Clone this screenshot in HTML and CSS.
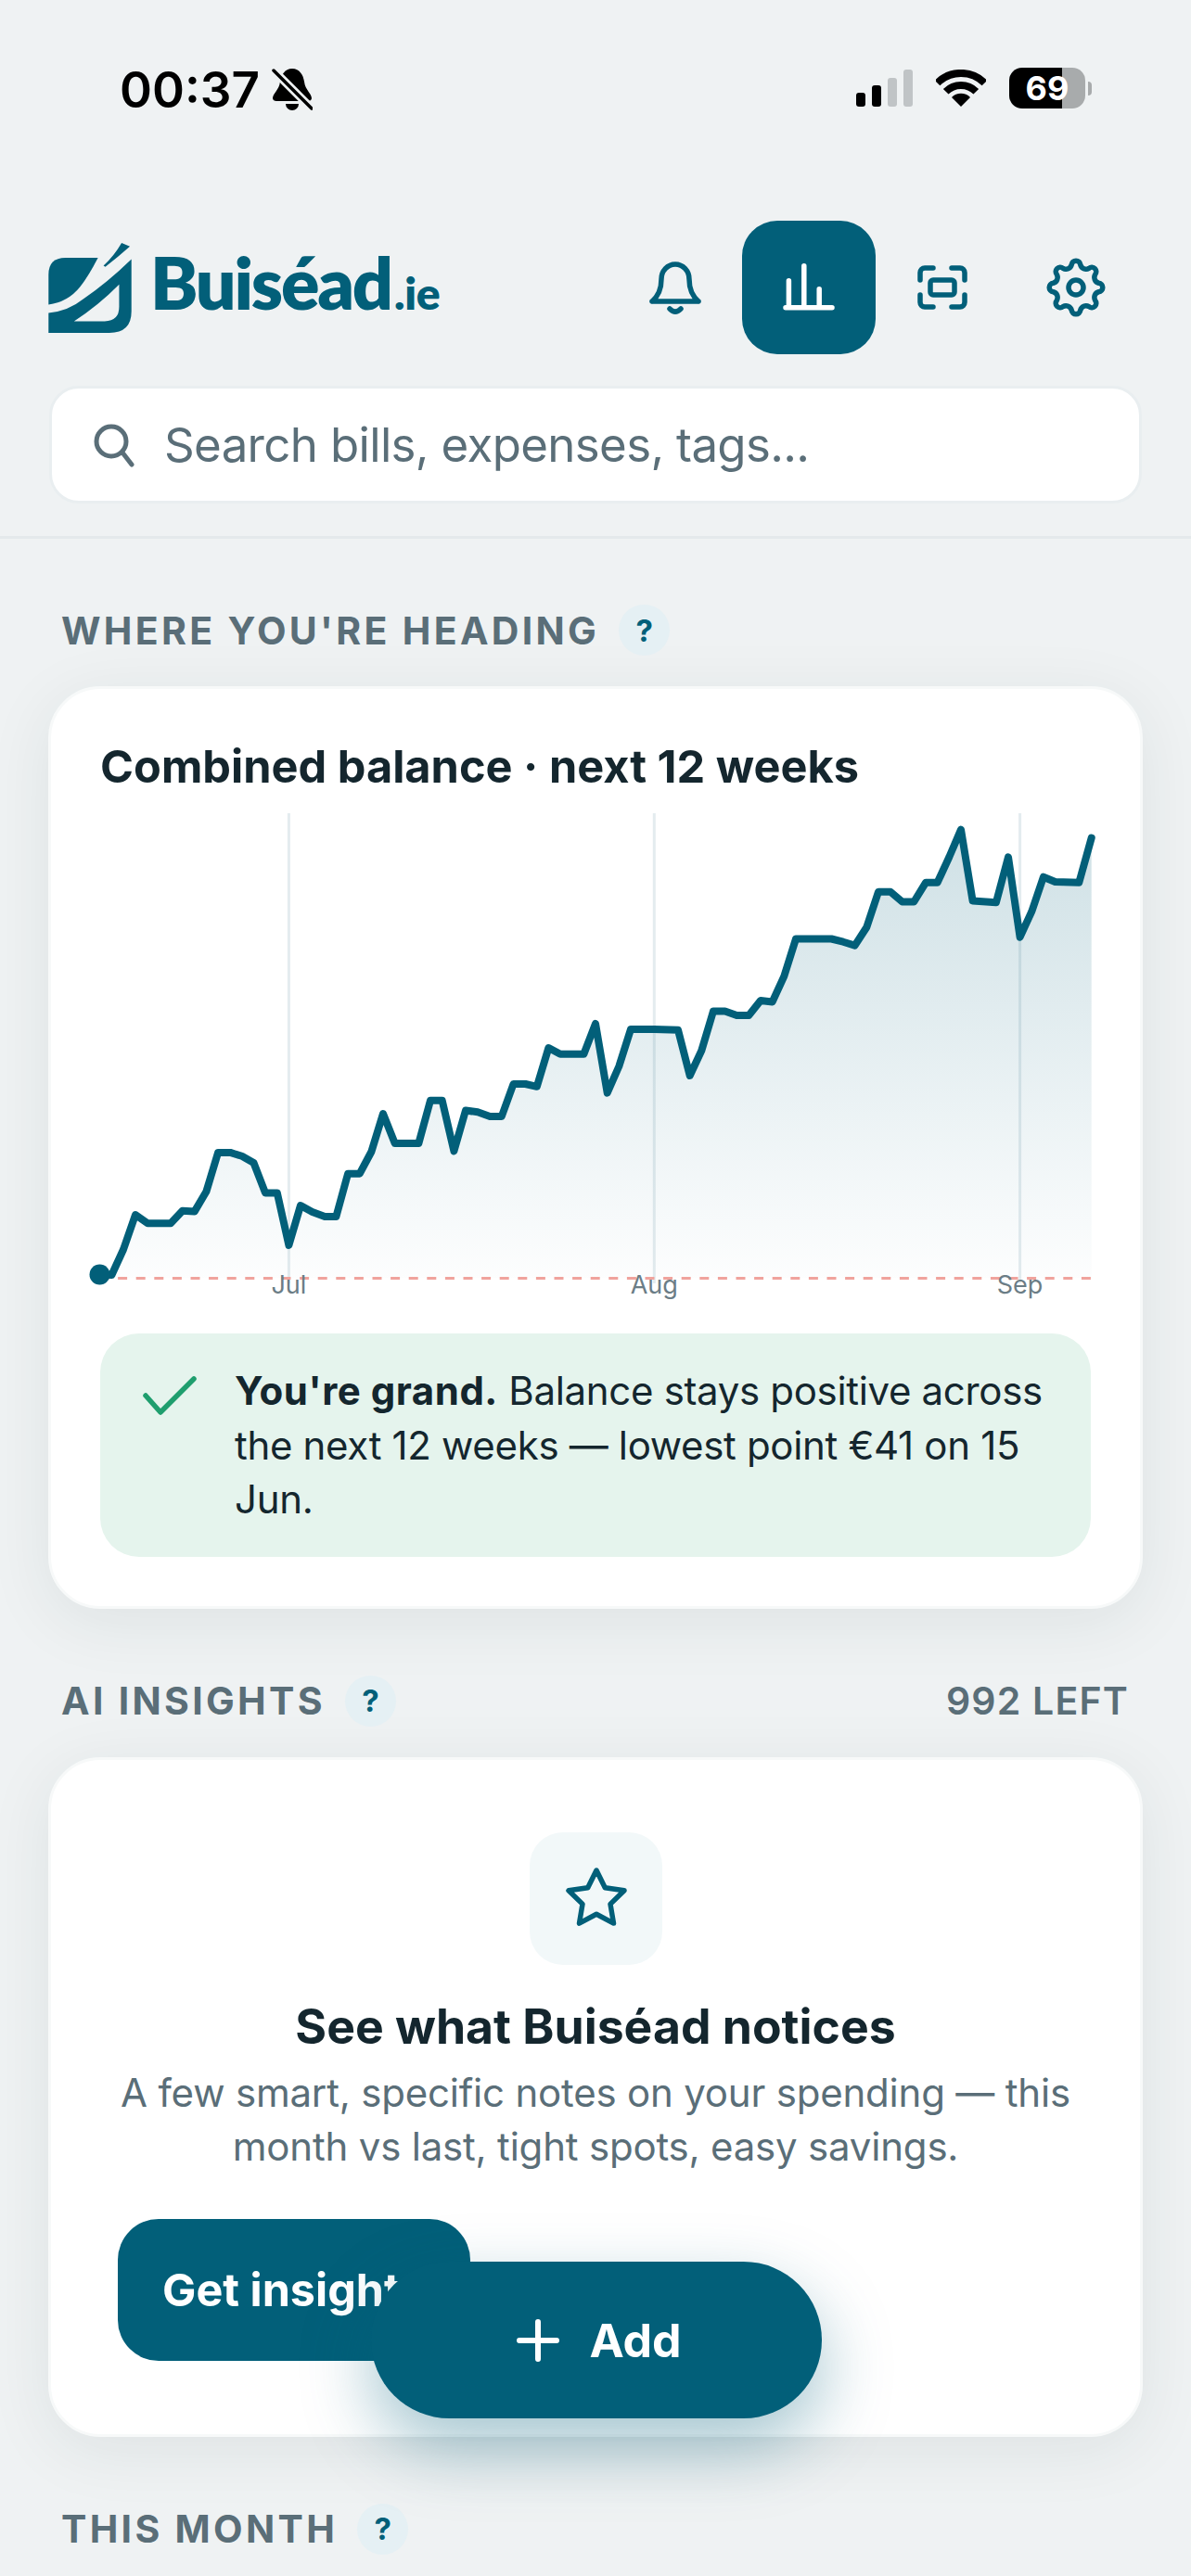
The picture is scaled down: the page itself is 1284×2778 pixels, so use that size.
FILE: index.html
```html
<!DOCTYPE html>
<html lang="en">
<head>
    <meta charset="UTF-8">
    <meta name="viewport" content="width=device-width, initial-scale=1.0">
    <title>Buiséad.ie</title>
    <link rel="stylesheet" href="styles.css">
</head>
<body>
    <div class="status">
        <div class="status-left">
            <span class="clock">00:37</span>
            <svg class="mute" viewBox="0 0 44 47">
                <path d="M22 1C30 1 34 8 35 15C36 24 43 28 43 33C43 35 41 36 39 36H5C3 36 1 35 1 33C1 28 8 24 9 15C10 8 14 1 22 1Z"/>
                <path d="M15 39H29A7 7 0 0 1 15 39Z"/>
                <path class="mute-gap" d="M0 1L44 45"/>
                <path class="mute-line" d="M2 3L43 44"/>
            </svg>
        </div>
        <div class="status-right">
            <div class="signal">
                <i class="bar bar-1"></i>
                <i class="bar bar-2"></i>
                <i class="bar bar-3"></i>
                <i class="bar bar-4"></i>
            </div>
            <svg class="wifi" viewBox="0 0 54 40">
                <path class="wifi-arc" d="M1.5 14.5A36 36 0 0 1 52.5 14.5"/>
                <path class="wifi-arc" d="M10.7 23.7A23 23 0 0 1 43.3 23.7"/>
                <path d="M27 40L17 30A14 14 0 0 1 37 30Z"/>
            </svg>
            <div class="battery">69</div>
            <i class="battery-nub"></i>
        </div>
    </div>

    <header class="topbar">
        <div class="brand">
            <svg class="brand-mark" viewBox="67 62 270 293">
                <path d="M67 165Q67 110 122 110L228 110Q200 165 170 205Q130 255 67 263Z"/>
                <path d="M305 62L332 73Q290 110 252 140L246 136Q280 105 305 62Z"/>
                <path fill-rule="evenodd" d="M337 115L337 285Q337 355 265 355L67 355L67 290Q130 285 180 245Q260 190 337 115ZM297 197L297 270Q297 317 250 317L150 317Q230 265 297 197Z"/>
            </svg>
            <span class="brand-name">Buiséad<span class="brand-tld">.ie</span></span>
        </div>
        <nav class="nav">
            <button class="nav-btn">
                <svg class="icon" viewBox="0 0 72 72">
                    <path d="M11 51H61M11 51C18 45 21 38 21 27A15 16 0 0 1 51 27C51 38 54 45 61 51M30 59Q36 65 42 59"/>
                </svg>
            </button>
            <button class="nav-btn nav-btn-active">
                <svg class="icon" viewBox="0 0 72 72">
                    <path d="M14.4 28.7V57.7M30.8 12.7V57.7M47.2 37.7V57.7M11 57.7H61"/>
                </svg>
            </button>
            <button class="nav-btn">
                <svg class="icon" viewBox="0 0 72 72">
                    <path d="M12 28V20A5 5 0 0 1 17 15H26M46 15H55A5 5 0 0 1 60 20V28M60 44V52A5 5 0 0 1 55 57H46M26 57H17A5 5 0 0 1 12 52V44"/>
                    <rect x="23" y="28" width="26" height="16" rx="3"/>
                </svg>
            </button>
            <button class="nav-btn">
                <svg class="icon" viewBox="0 0 72 72">
                    <path d="M31.23 11.46A4.8 4.8 0 0 1 40.77 11.46A6.2 6.2 0 0 0 49.98 15.27A4.8 4.8 0 0 1 56.73 22.02A6.2 6.2 0 0 0 60.54 31.23A4.8 4.8 0 0 1 60.54 40.77A6.2 6.2 0 0 0 56.73 49.98A4.8 4.8 0 0 1 49.98 56.73A6.2 6.2 0 0 0 40.77 60.54A4.8 4.8 0 0 1 31.23 60.54A6.2 6.2 0 0 0 22.02 56.73A4.8 4.8 0 0 1 15.27 49.98A6.2 6.2 0 0 0 11.46 40.77A4.8 4.8 0 0 1 11.46 31.23A6.2 6.2 0 0 0 15.27 22.02A4.8 4.8 0 0 1 22.02 15.27A6.2 6.2 0 0 0 31.23 11.46Z"/>
                    <circle cx="36" cy="36" r="8"/>
                </svg>
            </button>
        </nav>
    </header>

    <div class="search">
        <svg class="search-icon" viewBox="0 0 48 48">
            <circle cx="20" cy="20" r="16"/>
            <path d="M32 32L42 45"/>
        </svg>
        <span class="search-text">Search bills, expenses, tags...</span>
    </div>

    <main class="content">
        <section class="section">
            <div class="section-head">
                <div class="section-title">
                    <h2>WHERE YOU'RE HEADING</h2>
                    <span class="help">?</span>
                </div>
            </div>
            <div class="card">
                <h3 class="chart-title">Combined balance · next 12 weeks</h3>
                <svg class="chart" viewBox="108 870 1068 540">
                    <defs>
                        <linearGradient id="areaFill" gradientUnits="userSpaceOnUse" x1="0" y1="895" x2="0" y2="1378">
                            <stop offset="0" stop-color="#025f79" stop-opacity="0.19"/>
                            <stop offset="1" stop-color="#025f79" stop-opacity="0.01"/>
                        </linearGradient>
                    </defs>
                    <path class="chart-grid" d="M311.4 877V1384M705.3 877V1384M1099.6 877V1384"/>
                    <polygon fill="url(#areaFill)" points="107.5,1378 107.5,1374.5 120.4,1375 133,1347.5 146,1310 159.2,1319.3 184,1319.3 196.7,1305.7 209.8,1306.4 222.4,1285 235.1,1242.9 248.2,1242.9 260.8,1246.8 273.5,1254 286,1286.4 298.8,1286.4 311.4,1342.9 324,1300 336.7,1307 350.2,1312 362.4,1312 375.1,1265.7 387.8,1265.7 400.4,1242 413,1201 425.7,1232.9 451.4,1232.9 464,1186.8 476.7,1186.8 489.4,1241.4 502,1197.5 515,1199.3 528.2,1204 540.8,1204 553.5,1169 566.5,1169 578.8,1171.8 591.4,1130 604,1136.8 629.4,1136.8 642,1103.9 654.7,1178.6 667.3,1150 680,1110 705.3,1110 731,1110.7 743.7,1160 756.3,1133 769,1090.4 781.6,1090.4 794.3,1095 807.3,1095 820,1079 832.7,1080.4 845.3,1052.9 858,1012.5 896.3,1012.5 909,1015.7 921.6,1019.6 934.3,1000 947,961.8 960,961.8 972.7,972.5 985.3,972.5 998,951.8 1010.6,951.8 1023.3,924.3 1036,894.6 1048.6,971.4 1073.9,973.2 1087,924.3 1099.6,1010.7 1112.2,983.2 1124.9,945.7 1137.6,951 1163.3,951.8 1176.7,903.6 1176.7,1378"/>
                    <path class="chart-zero" d="M107.5 1378.6H1176.7"/>
                    <polyline class="chart-line" points="107.5,1374.5 120.4,1375 133,1347.5 146,1310 159.2,1319.3 184,1319.3 196.7,1305.7 209.8,1306.4 222.4,1285 235.1,1242.9 248.2,1242.9 260.8,1246.8 273.5,1254 286,1286.4 298.8,1286.4 311.4,1342.9 324,1300 336.7,1307 350.2,1312 362.4,1312 375.1,1265.7 387.8,1265.7 400.4,1242 413,1201 425.7,1232.9 451.4,1232.9 464,1186.8 476.7,1186.8 489.4,1241.4 502,1197.5 515,1199.3 528.2,1204 540.8,1204 553.5,1169 566.5,1169 578.8,1171.8 591.4,1130 604,1136.8 629.4,1136.8 642,1103.9 654.7,1178.6 667.3,1150 680,1110 705.3,1110 731,1110.7 743.7,1160 756.3,1133 769,1090.4 781.6,1090.4 794.3,1095 807.3,1095 820,1079 832.7,1080.4 845.3,1052.9 858,1012.5 896.3,1012.5 909,1015.7 921.6,1019.6 934.3,1000 947,961.8 960,961.8 972.7,972.5 985.3,972.5 998,951.8 1010.6,951.8 1023.3,924.3 1036,894.6 1048.6,971.4 1073.9,973.2 1087,924.3 1099.6,1010.7 1112.2,983.2 1124.9,945.7 1137.6,951 1163.3,951.8 1176.7,903.6"/>
                    <circle class="chart-dot" cx="107.5" cy="1374.5" r="11"/>
                    <text class="chart-label" x="311.4" y="1395">Jul</text>
                    <text class="chart-label" x="705.3" y="1395">Aug</text>
                    <text class="chart-label" x="1099.6" y="1395">Sep</text>
                </svg>
                <div class="alert">
                    <svg class="alert-icon" viewBox="0 0 60 60">
                        <path d="M4 30L20 48L56 12"/>
                    </svg>
                    <p><strong>You're grand.</strong> Balance stays positive across the next 12 weeks — lowest point €41 on 15 Jun.</p>
                </div>
            </div>
        </section>

        <section class="section">
            <div class="section-head">
                <div class="section-title">
                    <h2>AI INSIGHTS</h2>
                    <span class="help">?</span>
                </div>
                <span class="section-note">992 LEFT</span>
            </div>
            <div class="card card-insights">
                <div class="insights-icon">
                    <svg class="icon" viewBox="-1 0 72 72">
                        <polygon points="36,6 45.3,24.8 66,27.8 51,42.4 54.5,63.1 36,53.3 17.5,63.1 21,42.4 6,27.8 26.7,24.8"/>
                    </svg>
                </div>
                <h3 class="insights-title">See what Buiséad notices</h3>
                <p class="insights-text">A few smart, specific notes on your spending — this month vs last, tight spots, easy savings.</p>
                <button class="insights-btn">Get insights</button>
            </div>
        </section>

        <section class="section">
            <div class="section-head">
                <div class="section-title">
                    <h2>THIS MONTH</h2>
                    <span class="help">?</span>
                </div>
            </div>
        </section>
    </main>

    <button class="fab">
        <svg class="fab-icon" viewBox="0 0 46 46">
            <path d="M23 3V43M3 23H43"/>
        </svg>
        Add
    </button>
</body>
</html>
```

FILE: styles.css
```css
* {
    box-sizing: border-box;
}
html, body {
    margin: 0;
    padding: 0;
}
body {
    height: 100vh;
    overflow: hidden;
    background-color: #eff2f3;
    color: #14262e;
    font-family: Inter, "Liberation Sans", sans-serif;
}
h2, h3, p {
    margin: 0;
}
button {
    border: none;
    padding: 0;
    font-family: inherit;
    cursor: pointer;
}

/* status bar */
.status {
    display: flex;
    justify-content: space-between;
    height: 238px;
    padding: 68px 107px 0 129px;
}
.status-left, .status-right {
    display: flex;
    align-items: flex-start;
}
.clock {
    font-size: 53px;
    font-weight: 600;
    line-height: 58px;
    color: #000;
}
.mute {
    width: 44px;
    height: 47px;
    margin: 5px 0 0 13px;
}
.mute-gap {
    fill: none;
    stroke: #eff2f3;
    stroke-width: 9;
}
.mute-line {
    fill: none;
    stroke: #000;
    stroke-width: 3.5;
    stroke-linecap: round;
}
.signal {
    display: flex;
    align-items: flex-end;
    gap: 7px;
    height: 40px;
    margin-top: 7px;
}
.bar {
    width: 10px;
    border-radius: 3px;
    background: #000;
}
.bar-1 { height: 15px; }
.bar-2 { height: 23px; }
.bar-3 { height: 31px; background: #c0c4c6; }
.bar-4 { height: 40px; background: #c0c4c6; }
.wifi {
    width: 54px;
    height: 40px;
    margin: 7px 0 0 25px;
}
.wifi-arc {
    fill: none;
    stroke: #000;
    stroke-width: 8;
}
.battery {
    display: flex;
    align-items: center;
    justify-content: center;
    width: 82px;
    height: 44px;
    margin: 5px 0 0 25px;
    border-radius: 14px;
    background: linear-gradient(to right, #000 69.5%, #a8abac 69.5%);
    color: #fff;
    font-size: 36px;
    font-weight: 700;
}
.battery-nub {
    width: 4px;
    height: 15px;
    margin: 20px 0 0 3px;
    border-radius: 0 4px 4px 0;
    background: #a8abac;
}

/* header */
.topbar {
    display: flex;
    justify-content: space-between;
    align-items: center;
    height: 144px;
    padding: 0 52px;
}
.brand {
    display: flex;
    align-items: center;
    gap: 20px;
}
.brand-mark {
    width: 90px;
    height: 97px;
    fill: #025f79;
}
.brand-name {
    font-family: Lato, sans-serif;
    font-size: 77px;
    font-weight: 800;
    letter-spacing: -2.2px;
    line-height: 97px;
    color: #025f79;
}
.brand-tld {
    margin-left: 3px;
    font-size: 48px;
    letter-spacing: -0.2px;
}
.nav {
    display: flex;
}
.nav-btn {
    display: flex;
    align-items: center;
    justify-content: center;
    width: 144px;
    height: 144px;
    border-radius: 38px;
    background: transparent;
    color: #025f79;
}
.nav-btn-active {
    background: #025f79;
    color: #fff;
}
.icon {
    width: 72px;
    height: 72px;
    fill: none;
    stroke: currentColor;
    stroke-width: 5.5;
    stroke-linecap: round;
    stroke-linejoin: round;
}

/* search */
.search {
    display: flex;
    align-items: center;
    gap: 29px;
    height: 127px;
    margin: 34px 53px 35px;
    padding: 0 44px;
    border: 3px solid #e9eef0;
    border-radius: 32px;
    background: #fff;
}
.search-icon {
    width: 48px;
    height: 48px;
    fill: none;
    stroke: #5a6e78;
    stroke-width: 5;
    stroke-linecap: round;
}
.search-text {
    font-size: 51px;
    letter-spacing: -0.66px;
    color: #5a6e78;
}

/* sections */
.content {
    padding: 71px 52px 0;
    border-top: 3px solid #e4e9eb;
}
.section {
    margin-bottom: 72px;
}
.section-head {
    display: flex;
    justify-content: space-between;
    align-items: center;
    height: 55px;
    margin-bottom: 33px;
    padding: 0 15px 0 14px;
}
.section-title {
    display: flex;
    align-items: center;
    gap: 21px;
}
.section-title h2, .section-note {
    font-size: 41px;
    font-weight: 700;
    letter-spacing: 3.3px;
    color: #5a6e78;
}
.section-note {
    font-weight: 600;
    letter-spacing: 1.2px;
}
.help {
    display: flex;
    align-items: center;
    justify-content: center;
    width: 55px;
    height: 55px;
    border-radius: 50%;
    background: #e5f0f4;
    color: #025f79;
    font-size: 33px;
    font-weight: 700;
}
.card {
    padding: 54px 53px 53px;
    border: 3px solid #f7f9f9;
    border-radius: 56px;
    background: #fff;
    box-shadow: 0 14px 70px rgba(30, 50, 55, 0.08);
}

/* balance chart */
.chart-title {
    margin-bottom: 13px;
    font-size: 48.7px;
    font-weight: 700;
    line-height: 60px;
}
.chart {
    display: block;
    width: 1068px;
    height: 540px;
    overflow: visible;
}
.chart-grid {
    fill: none;
    stroke: #e4ecef;
    stroke-width: 3;
}
.chart-zero {
    fill: none;
    stroke: #f0a39d;
    stroke-width: 3;
    stroke-dasharray: 10 9.6;
}
.chart-line {
    fill: none;
    stroke: #025f79;
    stroke-width: 8;
    stroke-linecap: round;
    stroke-linejoin: round;
}
.chart-dot {
    fill: #025f79;
}
.chart-label {
    fill: #6b7d86;
    font-size: 27px;
    text-anchor: middle;
}
.alert {
    display: flex;
    align-items: flex-start;
    gap: 40px;
    margin-top: 28px;
    padding: 33px 40px 32px 45px;
    border-radius: 42px;
    background: #e5f4ed;
    font-size: 42px;
    line-height: 58.5px;
    letter-spacing: -0.33px;
}
.alert strong {
    letter-spacing: 0.5px;
}
.alert-icon {
    flex: none;
    width: 60px;
    height: 60px;
    margin-top: 4px;
    fill: none;
    stroke: #1f9e6e;
    stroke-width: 5.5;
    stroke-linecap: round;
    stroke-linejoin: round;
}

/* insights */
.card-insights {
    display: flex;
    flex-direction: column;
    align-items: center;
    padding: 78px 72px 79px;
}
.insights-icon {
    display: flex;
    align-items: center;
    justify-content: center;
    width: 143px;
    height: 143px;
    border-radius: 36px;
    background: #f2f8f9;
    color: #025f79;
}
.insights-title {
    margin-top: 36px;
    font-size: 51.7px;
    font-weight: 700;
    line-height: 60px;
}
.insights-text {
    margin-top: 13px;
    font-size: 42px;
    line-height: 58px;
    letter-spacing: -0.2px;
    text-align: center;
    color: #5a6e78;
}
.insights-btn {
    align-self: flex-start;
    height: 153px;
    margin-top: 49px;
    padding: 0 48px;
    border-radius: 44px;
    background: #025f79;
    color: #fff;
    font-size: 48.5px;
    font-weight: 700;
}

/* floating add button */
.fab {
    position: fixed;
    left: 400px;
    bottom: 170px;
    display: flex;
    align-items: center;
    justify-content: center;
    gap: 32px;
    width: 486px;
    height: 169px;
    padding-left: 6px;
    border-radius: 85px;
    background: #025f79;
    color: #fff;
    font-size: 50px;
    font-weight: 700;
    box-shadow: 0 30px 75px rgba(2, 95, 121, 0.36);
}
.fab-icon {
    width: 46px;
    height: 46px;
    fill: none;
    stroke: #fff;
    stroke-width: 6;
    stroke-linecap: round;
}
```
